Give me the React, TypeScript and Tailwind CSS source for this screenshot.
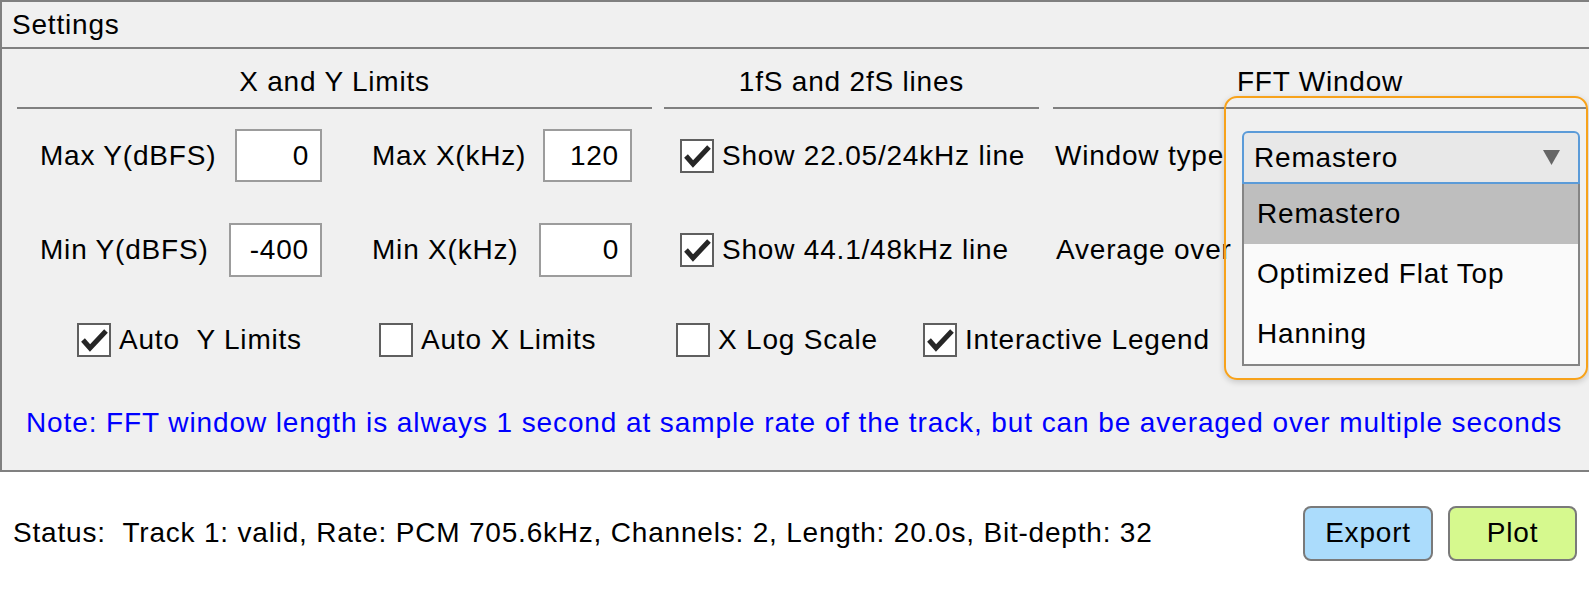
import React from 'react';

function CheckBox({ checked }: { checked: boolean }) {
  return (
    <span className="flex h-[34px] w-[34px] shrink-0 items-center justify-center border-2 border-[#5f5f5f] bg-white">
      {checked && (
        <svg viewBox="0 0 30 30" className="h-[30px] w-[30px]">
          <path d="M4 15 L11 23 L27 6" fill="none" stroke="#262626" strokeWidth="5" strokeLinejoin="miter" />
        </svg>
      )}
    </span>
  );
}

function Check({ checked, label }: { checked: boolean; label: string }) {
  return (
    <div className="flex items-center gap-[8px] whitespace-pre">
      <CheckBox checked={checked} />
      <span>{label}</span>
    </div>
  );
}

function NumField({ value, w, h }: { value: string; w: string; h: string }) {
  return (
    <div className={`flex items-center justify-end border-2 border-[#9c9c9c] bg-white pr-[11px] ${w} ${h}`}>
      {value}
    </div>
  );
}

function Header({ title }: { title: string }) {
  return (
    <div className="border-b-2 border-[#808080] pt-[17px] pb-[9px] text-center leading-[32px]">{title}</div>
  );
}

export default function App() {
  return (
    <div className="relative h-[596px] w-[1589px] overflow-hidden bg-white font-['Liberation_Sans',Arial,sans-serif] text-[28px] tracking-[0.8px] text-black">
      <div className="w-[1600px] border-2 border-[#808080] bg-[#f0f0f0]">
        <div className="flex h-[47px] items-center border-b-2 border-[#808080] pl-[10px]">Settings</div>

        <div className="grid grid-cols-[635px_375px_536px] gap-x-[12px] pl-[15px]">
          <Header title="X and Y Limits" />
          <Header title="1fS and 2fS lines" />
          <div className="pl-[2px]">
            <Header title="FFT Window" />
          </div>
        </div>

        <div className="mt-[20px] grid h-[53px] grid-cols-[635px_375px_536px] items-center gap-x-[12px] pl-[15px]">
          <div className="flex items-center pl-[23px]">
            <div className="flex w-[282px] items-center justify-between">
              <span>Max Y(dBFS)</span>
              <NumField value="0" w="w-[87px]" h="h-[53px]" />
            </div>
            <div className="ml-[50px] flex w-[260px] items-center justify-between">
              <span>Max X(kHz)</span>
              <NumField value="120" w="w-[89px]" h="h-[53px]" />
            </div>
          </div>
          <div className="pl-[16px]">
            <Check checked label="Show 22.05/24kHz line" />
          </div>
          <div className="pl-[4px]">Window type</div>
        </div>

        <div className="mt-[41px] grid h-[54px] grid-cols-[635px_375px_536px] items-center gap-x-[12px] pl-[15px]">
          <div className="flex items-center pl-[23px]">
            <div className="flex w-[282px] items-center justify-between">
              <span>Min Y(dBFS)</span>
              <NumField value="-400" w="w-[93px]" h="h-[54px]" />
            </div>
            <div className="ml-[50px] flex w-[260px] items-center justify-between">
              <span>Min X(kHz)</span>
              <NumField value="0" w="w-[93px]" h="h-[54px]" />
            </div>
          </div>
          <div className="pl-[16px]">
            <Check checked label="Show 44.1/48kHz line" />
          </div>
          <div className="pl-[5px]">Average over</div>
        </div>

        <div className="mt-[46px] flex h-[34px] items-center pl-[75px]">
          <div className="w-[302px]">
            <Check checked label="Auto  Y Limits" />
          </div>
          <div className="w-[297px]">
            <Check checked={false} label="Auto X Limits" />
          </div>
          <div className="w-[247px]">
            <Check checked={false} label="X Log Scale" />
          </div>
          <div>
            <Check checked label="Interactive Legend" />
          </div>
        </div>

        <div className="mt-[50px] mb-[31px] pl-[24px] leading-[32px] tracking-[0.9px] text-[#0000ff]">
          Note: FFT window length is always 1 second at sample rate of the track, but can be averaged over multiple seconds
        </div>
      </div>

      <div className="flex h-[122px] items-center justify-between pl-[13px] pr-[12px]">
        <span className="whitespace-pre">Status:  Track 1: valid, Rate: PCM 705.6kHz, Channels: 2, Length: 20.0s, Bit-depth: 32</span>
        <div className="flex gap-[15px]">
          <button className="h-[55px] w-[130px] rounded-[8px] border-2 border-[#7a7a7a] bg-[#abdcfc]">Export</button>
          <button className="h-[55px] w-[129px] rounded-[8px] border-2 border-[#7a7a7a] bg-[#d6f98e]">Plot</button>
        </div>
      </div>

      {/* open dropdown with focus ring */}
      <div className="absolute left-[1224px] top-[96px] h-[284px] w-[364px] rounded-[13px] border-2 border-[#f7a21b] pl-[16px] pt-[33px] shadow-[0_2px_6px_rgba(0,0,0,0.18)]">
        <div className="flex h-[53px] w-[338px] items-center justify-between rounded-t-[6px] border-2 border-[#5b9bd8] bg-[#e8e8e8] pl-[10px] pr-[18px]">
          <span>Remastero</span>
          <svg viewBox="0 0 17 15" className="h-[15px] w-[17px]">
            <polygon points="0,0 17,0 8.5,15" fill="#666666" />
          </svg>
        </div>
        <div className="w-[338px] border-2 border-t-0 border-[#858585] bg-[#fafafa]">
          <div className="flex h-[60px] items-center bg-[#bebebe] pl-[13px]">Remastero</div>
          <div className="flex h-[60px] items-center pl-[13px]">Optimized Flat Top</div>
          <div className="flex h-[60px] items-center pl-[13px]">Hanning</div>
        </div>
      </div>
    </div>
  );
}
